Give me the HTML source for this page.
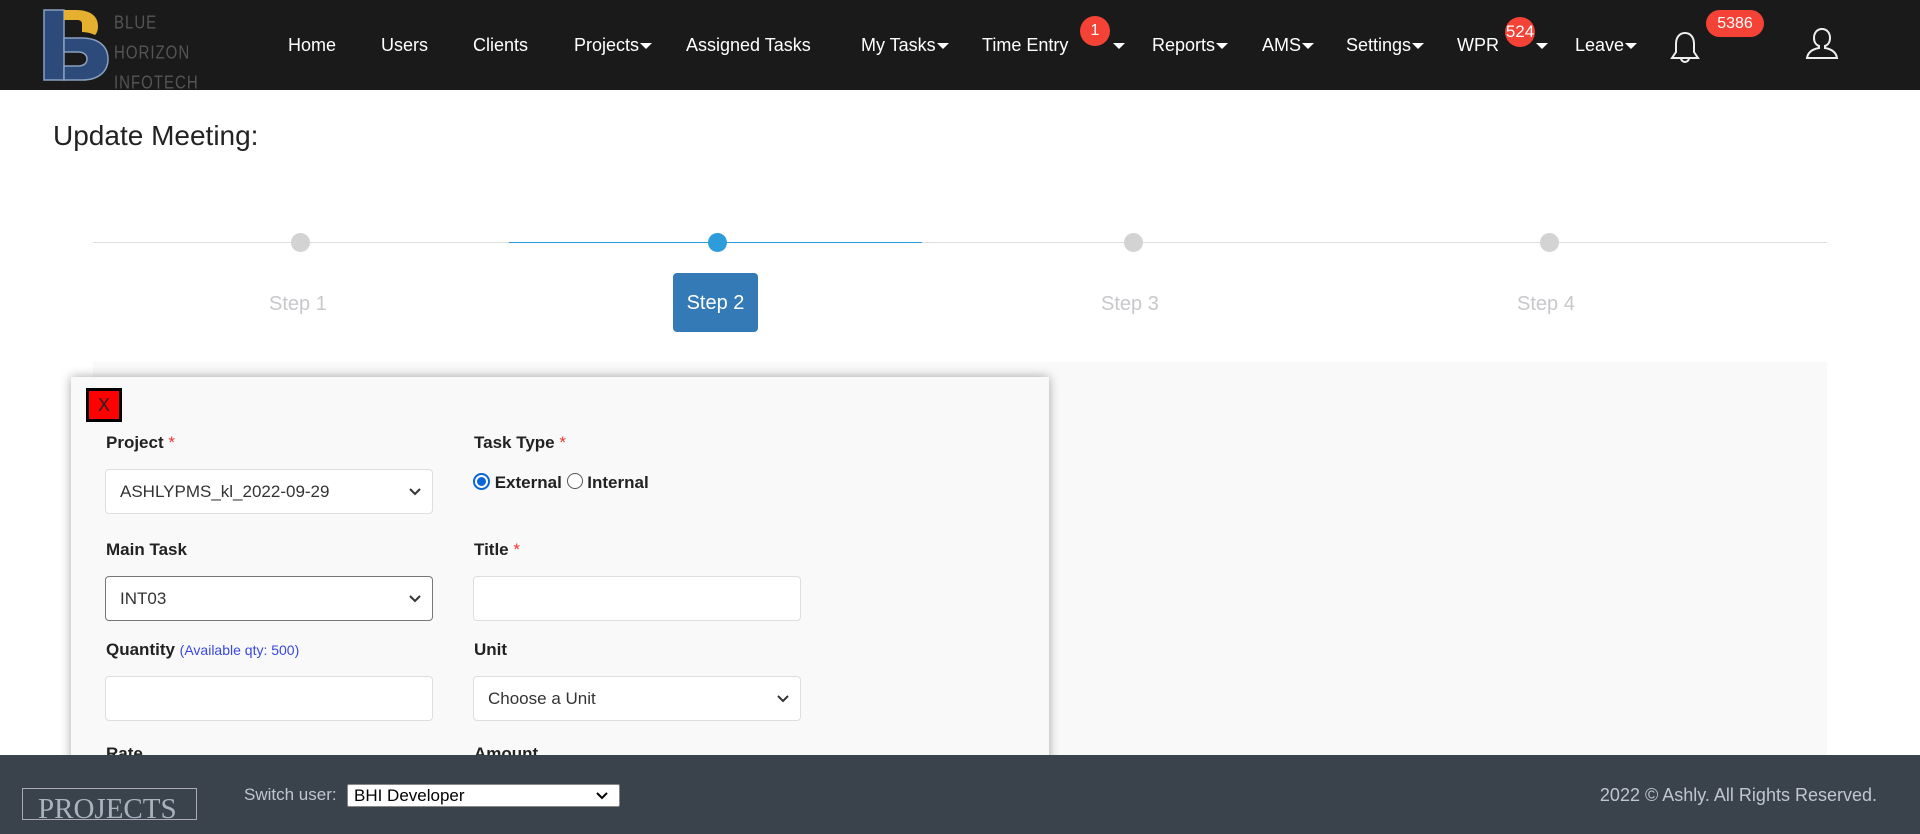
<!DOCTYPE html>
<html><head><meta charset="utf-8"><style>
*{box-sizing:border-box;margin:0;padding:0}
body{width:1920px;height:834px;overflow:hidden;background:#fff;font-family:"Liberation Sans",Arial,sans-serif;position:relative}
.abs{position:absolute}
.nav{left:0;top:0;width:1920px;height:90px;background:#1a1a1a}
.ni{position:absolute;top:35px;color:#fff;font-size:18px;white-space:nowrap}
.car{display:inline-block;width:0;height:0;border-left:6px solid transparent;border-right:6px solid transparent;border-top:6px solid #fff;vertical-align:middle;margin-left:1px}
.badge{position:absolute;background:#f44336;color:#fff;font-size:16px;text-align:center}
.step{position:absolute;font-size:20px;color:#c8c8cc;top:293px}
.dot{position:absolute;top:233px;width:19px;height:19px;border-radius:50%;background:#d3d3d3}
.lbl{position:absolute;font-size:17px;font-weight:bold;color:#222}
.lbl .r{color:#e33;font-weight:normal}
.inp{position:absolute;width:328px;height:45px;background:#fff;border:1px solid #dedede;border-radius:4px;font-size:17px;color:#333;padding:12px 14px}
.chev{position:absolute;right:10px;top:14px}
</style></head><body>
<div class="abs nav">
 <svg class="abs" style="left:40px;top:8px" width="72" height="74" viewBox="0 0 72 74">
  <path d="M4 2h20v70H4z" fill="#2c4a7a" stroke="#8aa0c0" stroke-width="1.5"/>
  <path d="M24 30h18c16 0 26 8 26 21s-10 21-26 21H24V58h14c6 0 9-3 9-7s-3-7-9-7H24z" fill="#2c4a7a" stroke="#8aa0c0" stroke-width="1.5"/>
  <path d="M24 2h12c14 0 22 6 22 16 0 4-1 7-3 9-4-2-9-3-13-3v-8c0-3-2-4-5-4h-13z" fill="#e5b02f"/>
 </svg>
 <div class="abs" style="left:114px;top:8px;color:#555;font-size:15px;line-height:25px;letter-spacing:1px;transform:scaleY(1.2);transform-origin:top left">BLUE<br>HORIZON<br>INFOTECH</div>
 <div class="ni" style="left:288px">Home</div>
 <div class="ni" style="left:381px">Users</div>
 <div class="ni" style="left:473px">Clients</div>
 <div class="ni" style="left:574px">Projects<span class="car"></span></div>
 <div class="ni" style="left:686px">Assigned Tasks</div>
 <div class="ni" style="left:861px">My Tasks<span class="car"></span></div>
 <div class="ni" style="left:982px">Time Entry</div>
 <div class="badge" style="left:1080px;top:16px;width:30px;height:30px;border-radius:50%;line-height:30px">1</div>
 <div class="ni" style="left:1112px"><span class="car"></span></div>
 <div class="ni" style="left:1152px">Reports<span class="car"></span></div>
 <div class="ni" style="left:1262px">AMS<span class="car"></span></div>
 <div class="ni" style="left:1346px">Settings<span class="car"></span></div>
 <div class="ni" style="left:1457px">WPR</div>
 <div class="badge" style="left:1505px;top:17px;width:30px;height:30px;border-radius:50%;line-height:30px;font-size:17px">524</div>
 <div class="ni" style="left:1535px"><span class="car"></span></div>
 <div class="ni" style="left:1575px">Leave<span class="car"></span></div>
 <svg class="abs" style="left:1670px;top:30px" width="30" height="35" viewBox="0 0 30 35"><path d="M15 3c-6 0-9 5-9 11v8l-4 6h26l-4-6v-8c0-6-3-11-9-11zM11 28a4 4 0 0 0 8 0" fill="none" stroke="#eee" stroke-width="2"/></svg>
 <div class="badge" style="left:1706px;top:10px;width:58px;height:27px;border-radius:14px;line-height:27px">5386</div>
 <svg class="abs" style="left:1805px;top:26px" width="34" height="34" viewBox="0 0 34 34"><path d="M17 3c-5 0-8 4-8 9 0 4 2 7 5 8v2c-6 1-11 4-12 10h30c-1-6-6-9-12-10v-2c3-1 5-4 5-8 0-5-3-9-8-9z" fill="none" stroke="#eee" stroke-width="2"/></svg>
</div>
<div class="abs" style="left:53px;top:120px;font-size:28px;color:#222">Update Meeting:</div>
<div class="abs" style="left:93px;top:242px;width:1734px;height:1px;background:#ddd"></div>
<div class="abs" style="left:509px;top:242px;width:413px;height:1px;background:#2d9cdb"></div>
<div class="dot" style="left:291px"></div>
<div class="dot" style="left:708px;background:#2d9cdb"></div>
<div class="dot" style="left:1124px"></div>
<div class="dot" style="left:1540px"></div>
<div class="step" style="left:269px">Step 1</div>
<div class="abs" style="left:673px;top:273px;width:85px;height:59px;background:#337ab7;border-radius:4px;color:#fff;font-size:20px;text-align:center;line-height:61px">Step 2</div>
<div class="step" style="left:1101px">Step 3</div>
<div class="step" style="left:1517px">Step 4</div>
<div class="abs" style="left:93px;top:362px;width:1734px;height:400px;background:#f9f9f9"></div>
<div class="abs" style="left:71px;top:377px;width:978px;height:420px;background:#f9f9f9;box-shadow:0 0 10px rgba(0,0,0,.35)"></div>
<div class="abs" style="left:86px;top:388px;width:36px;height:34px;background:#f00;border:3px solid #000;color:#222;font-size:18px;text-align:center;line-height:28px">X</div>
<div class="lbl" style="left:106px;top:433px">Project <span class="r">*</span></div>
<div class="lbl" style="left:474px;top:433px">Task Type <span class="r">*</span></div>
<div class="inp" style="left:105px;top:469px">ASHLYPMS_kl_2022-09-29<svg class="chev" width="14" height="14" viewBox="0 0 14 14"><path d="M2 5l5 5 5-5" fill="none" stroke="#333" stroke-width="2"/></svg></div>
<div class="abs" style="left:473px;top:473px;font-size:17px;font-weight:bold;color:#222">
 <span style="display:inline-block;width:17px;height:17px;border-radius:50%;border:2px solid #0a66d8;vertical-align:-2px;position:relative;background:#fff"><span style="position:absolute;left:2px;top:2px;width:9px;height:9px;border-radius:50%;background:#0a66d8"></span></span> External <span style="display:inline-block;width:16px;height:16px;border-radius:50%;border:1px solid #555;vertical-align:-1px;background:#fff"></span> Internal</div>
<div class="lbl" style="left:106px;top:540px">Main Task</div>
<div class="lbl" style="left:474px;top:540px">Title <span class="r">*</span></div>
<div class="inp" style="left:105px;top:576px;border-color:#777">INT03<svg class="chev" width="14" height="14" viewBox="0 0 14 14"><path d="M2 5l5 5 5-5" fill="none" stroke="#333" stroke-width="2"/></svg></div>
<div class="inp" style="left:473px;top:576px"></div>
<div class="lbl" style="left:106px;top:640px">Quantity <span style="font-weight:normal;font-size:14px;color:#3a48e0">(Available qty: 500)</span></div>
<div class="lbl" style="left:474px;top:640px">Unit</div>
<div class="inp" style="left:105px;top:676px"></div>
<div class="inp" style="left:473px;top:676px">Choose a Unit<svg class="chev" width="14" height="14" viewBox="0 0 14 14"><path d="M2 5l5 5 5-5" fill="none" stroke="#333" stroke-width="2"/></svg></div>
<div class="lbl" style="left:106px;top:744px">Rate</div>
<div class="lbl" style="left:474px;top:744px">Amount</div>
<div class="abs" style="left:0;top:755px;width:1920px;height:79px;background:#3a424c"></div>
<div class="abs" style="left:22px;top:788px;width:175px;height:32px;border:1px solid #aab;color:#aab2c0;font-family:'Liberation Serif',serif;font-size:29px;line-height:40px;padding-left:15px;overflow:hidden;white-space:nowrap">PROJECTS</div>
<div class="abs" style="left:244px;top:785px;color:#c0c6cf;font-size:17px">Switch user:</div>
<div class="abs" style="left:347px;top:784px;width:273px;height:23px;background:#fff;border:1px solid #888;border-radius:2px;font-size:17px;color:#000;padding:1px 6px">BHI Developer<svg class="chev" style="top:5px" width="14" height="12" viewBox="0 0 14 12"><path d="M2 3l5 5 5-5" fill="none" stroke="#000" stroke-width="2"/></svg></div>
<div class="abs" style="right:43px;top:785px;color:#c0c6cf;font-size:18px">2022 © Ashly. All Rights Reserved.</div>
</body></html>
